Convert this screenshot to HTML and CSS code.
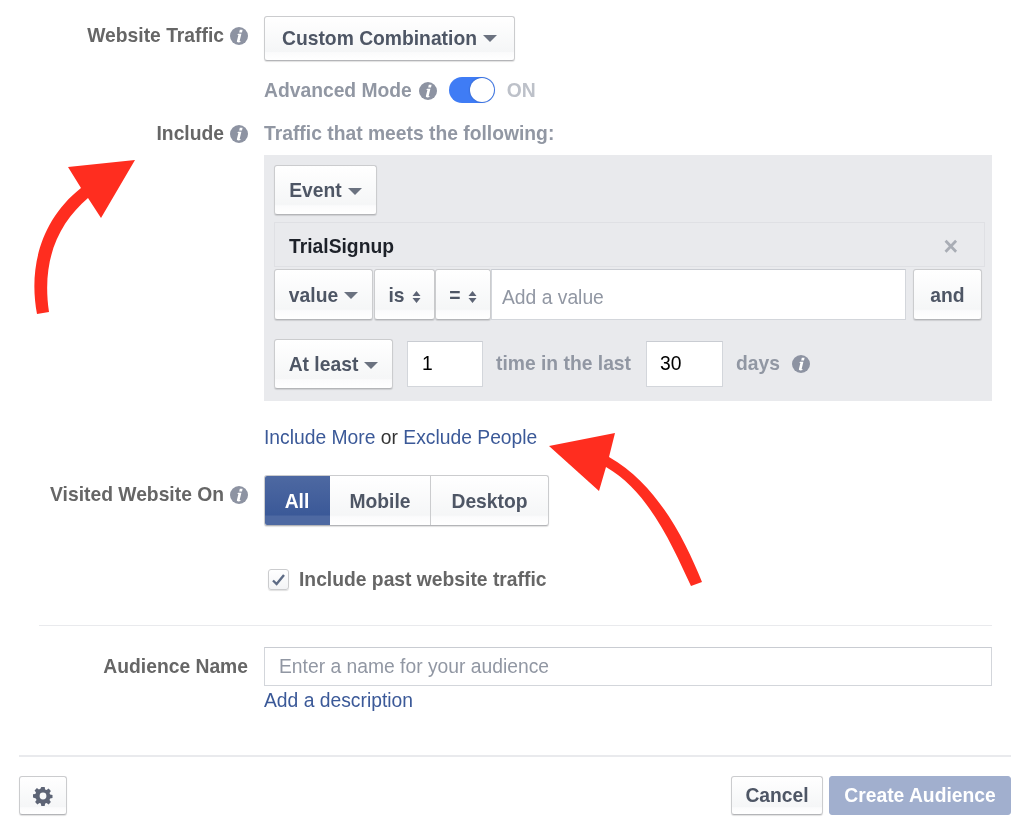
FILE: index.html
```html
<!DOCTYPE html>
<html lang="en">
<head>
<meta charset="utf-8">
<title>Create Audience</title>
<link rel="stylesheet" href="styles.css">
</head>
<body>
<svg width="0" height="0" class="defs">
  <symbol id="info" viewBox="0 0 18 18">
    <circle cx="9" cy="9" r="9" fill="#8d93a2"/>
    <path d="M9.8 2.8h2.8l-.6 2.6H9.2zM8.2 6.8h3.2l-1.7 7c-.1.4.3.5 1 .2l-.2 1c-1.8.7-3.9.6-3.6-1L8.4 8 7.2 7.8z" fill="#fff"/>
  </symbol>
  <symbol id="updown" viewBox="0 0 9 14">
    <path d="M4.5 1 8.5 6h-8zM.5 8h8l-4 5z" fill="#5d6475"/>
  </symbol>
</svg>

<main class="page">
  <div class="content">
  <section class="form">
    <div class="row row-traffic">
      <div class="label">Website Traffic <svg class="info"><use href="#info"/></svg></div>
      <div class="body">
        <button class="btn btn-custom">Custom Combination <span class="caret"></span></button>
      </div>
    </div>

    <div class="row row-mode">
      <div class="label"></div>
      <div class="body mode">
        <span class="muted">Advanced Mode</span>
        <svg class="info"><use href="#info"/></svg>
        <span class="toggle"><span class="knob"></span></span>
        <span class="on">ON</span>
      </div>
    </div>

    <div class="row row-include">
      <div class="label">Include <svg class="info"><use href="#info"/></svg></div>
      <div class="body"><span class="muted">Traffic that meets the following:</span></div>
    </div>

    <div class="row">
      <div class="label"></div>
      <div class="body panel">
        <button class="btn btn-event">Event <span class="caret"></span></button>
        <div class="event-bar"><b>TrialSignup</b><span class="close">×</span></div>
        <div class="filter">
          <button class="btn f-value">value <span class="caret"></span></button>
          <button class="btn f-is">is <svg class="updown"><use href="#updown"/></svg></button>
          <button class="btn f-eq">= <svg class="updown"><use href="#updown"/></svg></button>
          <input class="field f-input" placeholder="Add a value">
          <button class="btn f-and">and</button>
        </div>
        <div class="freq">
          <button class="btn f-least">At least <span class="caret"></span></button>
          <input class="field num" value="1">
          <span class="muted">time in the last</span>
          <input class="field num" value="30">
          <span class="muted">days</span>
          <svg class="info days-info"><use href="#info"/></svg>
        </div>
      </div>
    </div>

    <div class="row row-links">
      <div class="label"></div>
      <div class="body links"><a>Include More</a> or <a>Exclude People</a></div>
    </div>

    <div class="row row-device">
      <div class="label label-device">Visited Website On <svg class="info"><use href="#info"/></svg></div>
      <div class="body">
        <div class="segment">
          <span class="seg seg-all">All</span><span class="seg seg-mobile">Mobile</span><span class="seg seg-desktop">Desktop</span>
        </div>
      </div>
    </div>

    <div class="row row-check">
      <div class="label"></div>
      <div class="body check">
        <span class="box"><svg width="15" height="13" viewBox="0 0 15 13"><path d="M2 7.5 5.6 11 13 2" fill="none" stroke="#5d6b85" stroke-width="2.4"/></svg></span>
        <span class="check-text">Include past website traffic</span>
      </div>
    </div>

    <div class="row row-name">
      <div class="label label-plain">Audience Name</div>
      <div class="body">
        <input class="field name" placeholder="Enter a name for your audience">
        <a class="desc">Add a description</a>
      </div>
    </div>
  </section>

  <footer class="footer">
    <button class="btn gear" aria-label="Settings">
      <svg width="20" height="20" viewBox="0 0 20 20"><path fill-rule="evenodd" fill="#5d6475" d="M8.3 1h3.4l.4 2.4 1.5.6 2-1.4 2.3 2.4-1.4 2 .6 1.5 2.4.4v3.2l-2.4.4-.6 1.5 1.4 2-2.3 2.4-2-1.4-1.5.6-.4 2.4H8.3l-.4-2.4-1.5-.6-2 1.4-2.3-2.4 1.4-2-.6-1.5L0 11.5V8.3l2.4-.4.6-1.5-1.4-2L3.9 2l2 1.4 1.5-.6zM10 6.6a3.4 3.4 0 1 0 0 6.8 3.4 3.4 0 0 0 0-6.8z"/></svg>
    </button>
    <div class="actions">
      <button class="btn cancel">Cancel</button>
      <button class="btn create">Create Audience</button>
    </div>
  </footer>
  </div>

  <svg class="arrows" width="1024" height="826" viewBox="0 0 1024 826">
    <path fill="#ff2d1f" d="M37 314C29 272 38 222 81 188L68 167 135 160 101 218 88 198C60 222 41 258 49 312Z"/>
    <path fill="#ff2d1f" d="M691 586C674 550 650 492 606 467L599 491 549 446 615 433 609 457C658 485 685 540 702 582Z"/>
  </svg>
</main>
</body>
</html>
```
FILE: styles.css
```css
* { box-sizing: border-box; }
html, body { margin: 0; background: #fff; }
body { font-family: "Liberation Sans", Arial, sans-serif; color: #4e5665; }
.defs { position: absolute; }
.page { position: relative; width: 1024px; height: 826px; overflow: hidden; padding-top: 16px; }
.content { filter: blur(0.35px); }
.form { margin-left: 39px; width: 953px; }
.row { display: flex; }
.label {
  width: 209px; flex: none; margin-right: 16px; padding-top: 2px;
  display: flex; justify-content: flex-end; align-items: center; gap: 6px;
  height: 26px; font-size: 19.3px; font-weight: 700; color: #666; white-space: nowrap;
}
.body { flex: 1; min-width: 0; }
.info { width: 18px; height: 18px; flex: none; }
.muted { font-size: 19.3px; font-weight: 700; color: #9197a3; white-space: nowrap; }

.btn {
  font-family: inherit; font-size: 19.3px; font-weight: 700; color: #4e5665;
  background: linear-gradient(#fff 0%, #f5f6f7 80%, #fbfbfc 83%, #fff 100%);
  border: 1px solid #cbccce; border-bottom-color: #b4b5b8; border-radius: 3px;
  box-shadow: 0 1px 1px rgba(0,0,0,.12);
  padding: 2px 0 0; white-space: nowrap;
  display: inline-flex; align-items: center; justify-content: center;
}
.caret {
  display: inline-block; width: 0; height: 0; margin-left: 6px;
  border-left: 7px solid transparent; border-right: 7px solid transparent;
  border-top: 7px solid #6b7280;
}
.updown { width: 9px; height: 14px; margin: 3px 0 0 7px; }
.field {
  font-family: inherit; font-size: 19.3px; color: #000;
  border: 1px solid #d3d6db; border-top-color: #c9ccd2; background: #fff;
  padding: 0; outline: none; border-radius: 0;
}
.field::placeholder { color: #9197a3; opacity: 1; }

.row-traffic .label { margin-top: 6px; }
.btn-custom { width: 251px; height: 45px; padding-top: 0; }

.row-mode { margin-top: 16px; }
.mode { display: flex; align-items: center; height: 26px; padding-top: 2px; }
.mode .info { margin-left: 7px; }
.toggle {
  width: 46px; height: 26px; margin: 0 0 2px 12px; border-radius: 13px;
  background: #3f7cf5; display: flex; justify-content: flex-end;
}
.knob {
  width: 24px; height: 24px; margin: 1px; border-radius: 50%;
  background: #fff; box-shadow: 0 0 2px rgba(0,0,0,.3);
}
.on { margin-left: 12px; font-size: 19.3px; font-weight: 700; color: #bdc1c9; }

.row-include { margin-top: 17px; }
.row-include .body { height: 26px; display: flex; align-items: center; padding-top: 2px; }

.panel {
  margin-top: 9px; height: 246px; background: #e9eaed;
  padding: 10px 7px 0 10px;
}
.btn-event { width: 103px; height: 50px; display: flex; }
.event-bar {
  margin-top: 7px; height: 45px; width: 711px;
  border: 1px solid #dfe0e4;
  display: flex; align-items: center; justify-content: space-between;
  padding: 4px 26px 0 14px;
}
.event-bar b { font-size: 19.3px; color: #1d2129; }
.close { font-size: 25px; font-weight: 700; color: #a9adb5; line-height: 1; }

.filter { display: flex; height: 51px; margin-top: 2px; width: 708px; }
.f-value { width: 99px; margin-right: 1px; }
.f-is { width: 61px; }
.f-eq { width: 56px; }
.f-input { width: 415px; padding: 6px 0 0 10px; margin-right: 7px; }
.f-and { width: 69px; }

.freq { display: flex; align-items: center; margin-top: 19px; height: 50px; }
.f-least { width: 119px; height: 50px; margin-right: 14px; }
.num { width: 76px; height: 46px; padding-left: 14px; margin-right: 13px; }
.freq .muted + .num { margin-left: 15px; width: 77px; padding-left: 13px; }
.days-info { margin-left: 12px; }

.row-links { margin-top: 24px; }
.links { font-size: 19.3px; color: #333; height: 26px; line-height: 26px; white-space: nowrap; }
a { color: #3b5998; }

.row-device { margin-top: 24px; }
.label-device { margin-top: 6px; }
.segment {
  display: flex; width: 285px; height: 51px;
  border: 1px solid #cbccce; border-bottom-color: #b4b5b8; border-radius: 3px;
  box-shadow: 0 1px 1px rgba(0,0,0,.12);
  background: linear-gradient(#fff 0%, #f5f6f7 80%, #fbfbfc 83%, #fff 100%); overflow: hidden;
}
.seg { display: flex; align-items: center; justify-content: center; padding-top: 2px; font-size: 19.3px; font-weight: 700; color: #4e5665; }
.seg-all { width: 66px; margin: -1px 0 -1px -1px; color: #fff; background: linear-gradient(#4e69a2 0%, #3b5998 78%, #4e69a2 81%, #4e69a2 100%); }
.seg-mobile { width: 101px; border-right: 1px solid #cbccce; }
.seg-desktop { flex: 1; }

.row-check { margin-top: 43px; }
.check { display: flex; align-items: center; height: 21px; padding-left: 4px; }
.box {
  width: 21px; height: 21px; border: 1px solid #cbccce; border-radius: 3px;
  background: linear-gradient(#fff, #f3f4f6); box-shadow: 0 1px 1px rgba(0,0,0,.12);
  display: flex; align-items: center; justify-content: center;
}
.check-text { margin-left: 10px; font-size: 19.3px; font-weight: 700; color: #666; white-space: nowrap; }

.row-name { margin-top: 30px; padding-top: 21px; border-top: 1px solid #e9eaed; }
.label-plain { height: 39px; padding-top: 0; }
.name { display: block; width: 100%; height: 39px; padding-left: 14px; }
.desc { display: block; margin-top: 2px; font-size: 19.3px; line-height: 26px; }

.footer {
  margin: 41px 13px 0 19px;
  border-top: 2px solid #e9eaed; padding-top: 19px;
  display: flex; justify-content: space-between;
}
.gear { width: 48px; height: 39px; padding-top: 0; }
.actions { display: flex; gap: 6px; }
.cancel { width: 92px; height: 39px; padding-top: 0; }
.create { width: 182px; height: 39px; padding-top: 0; color: #fff; background: #a1afce; border-color: #a1afce; box-shadow: none; }

.arrows { position: absolute; left: 0; top: 0; pointer-events: none; filter: blur(0.3px); }
```
